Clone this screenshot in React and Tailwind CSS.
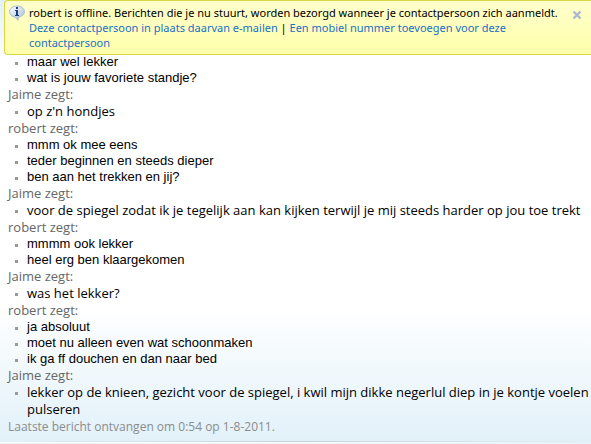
import { useState } from 'react';

const messages = [
  { from: 'robert', continued: true, lines: ['maar wel lekker', 'wat is jouw favoriete standje?'] },
  { from: 'Jaime', lines: ["op z'n hondjes"] },
  { from: 'robert', lines: ['mmm ok mee eens', 'teder beginnen en steeds dieper', 'ben aan het trekken en jij?'] },
  { from: 'Jaime', lines: ['voor de spiegel zodat ik je tegelijk aan kan kijken terwijl je mij steeds harder op jou toe trekt'] },
  { from: 'robert', lines: ['mmmm ook lekker', 'heel erg ben klaargekomen'] },
  { from: 'Jaime', lines: ['was het lekker?'] },
  { from: 'robert', lines: ['ja absoluut', 'moet nu alleen even wat schoonmaken', 'ik ga ff douchen en dan naar bed'] },
  { from: 'Jaime', lines: ['lekker op de knieen, gezicht voor de spiegel, i kwil mijn dikke negerlul diep in je kontje voelen pulseren'] },
];

function InfoIcon() {
  return (
    <svg width="16" height="16" viewBox="0 0 16 16" className="shrink-0" aria-hidden="true">
      <defs>
        <linearGradient id="bubble" x1="0" y1="0" x2="1" y2="1">
          <stop offset="0" stopColor="#ffffff" />
          <stop offset="1" stopColor="#a8bcd8" />
        </linearGradient>
      </defs>
      <path
        d="M8 1C3.900 1 .6 3.400.6 6.600c0 2.700 2.200 4.900 5.400 5.500L9 15.200v-2.900c3.600-.4 6.400-2.800 6.400-5.700C15.400 3.400 12.100 1 8 1z"
        fill="url(#bubble)"
        stroke="#9fb1cc"
        strokeWidth=".9"
      />
      <rect x="7" y="2" width="2" height="2" fill="#17407f" />
      <path d="M6 5h3v5h1v1H6v-1h1V6H6z" fill="#17407f" />
    </svg>
  );
}

function OfflineBanner({ onClose }) {
  return (
    <div className="relative z-10 ml-1 flex items-start rounded-l-sm border border-r-0 border-[#dcd440] bg-linear-to-b from-[#ffffcc] to-[#ffffaa] pt-1 pr-2 pb-1 pl-1">
      <InfoIcon />
      <p className="ml-1 flex-1 font-['Noto_Sans','Open_Sans',sans-serif] text-[11px] leading-[15px] text-black">
        robert is offline. Berichten die je nu stuurt, worden bezorgd wanneer je contactpersoon zich aanmeldt.{' '}
        <a href="#email" className="text-[#1a6fc4]">Deze contactpersoon in plaats daarvan e-mailen</a>
        {' | '}
        <a href="#mobiel" className="text-[#1a6fc4]">Een mobiel nummer toevoegen voor deze contactpersoon</a>
      </p>
      <button type="button" aria-label="Sluiten" onClick={onClose} className="mt-1 p-px">
        <svg width="10" height="10" viewBox="0 0 10 10" aria-hidden="true">
          <path d="M1.500 1.500l7 7M8.500 1.500l-7 7" stroke="#a9b8d0" strokeWidth="2.400" />
        </svg>
      </button>
    </div>
  );
}

function Message({ message }) {
  const isJaime = message.from === 'Jaime';
  return (
    <section>
      {!message.continued && (
        <h2 className="text-[13px] leading-[17px] text-[#666666]">{message.from} zegt:</h2>
      )}
      <ul
        className={
          isJaime
            ? 'text-[13px] leading-[17px]'
            : "font-['Liberation_Sans',sans-serif] text-[13px] leading-[16px]"
        }
      >
        {message.lines.map((line) => (
          <li key={line} className="flex pl-[7px] text-black">
            <span className="mt-[8px] mr-[9px] size-[3px] shrink-0 bg-[#999999]" />
            <span>{line}</span>
          </li>
        ))}
      </ul>
    </section>
  );
}

function App() {
  const [showBanner, setShowBanner] = useState(true);

  return (
    <div className="flex min-h-screen flex-col bg-linear-to-b from-[#e2f1f9] via-white via-15% to-white to-15% font-['Open_Sans','Noto_Sans',sans-serif]">
      {showBanner && <OfflineBanner onClose={() => setShowBanner(false)} />}
      <main className="-mt-px flex-1 bg-linear-to-b from-white from-65% to-[#e2f1f9] pl-2">
        {messages.map((message, i) => (
          <Message key={i} message={message} />
        ))}
        <p className="text-[12px] leading-[17px] text-[#8c8c8c]">Laatste bericht ontvangen om 0:54 op 1-8-2011.</p>
      </main>
      <footer className="bg-[#e8f4fa]">
        <div className="h-px bg-linear-to-r from-[#e2f1f9] via-[#c4d0d6] to-[#e2f1f9]" />
        <div className="h-px bg-linear-to-r from-white via-white to-[#e2f1f9]" />
        <div className="h-px" />
      </footer>
    </div>
  );
}

export default App;
